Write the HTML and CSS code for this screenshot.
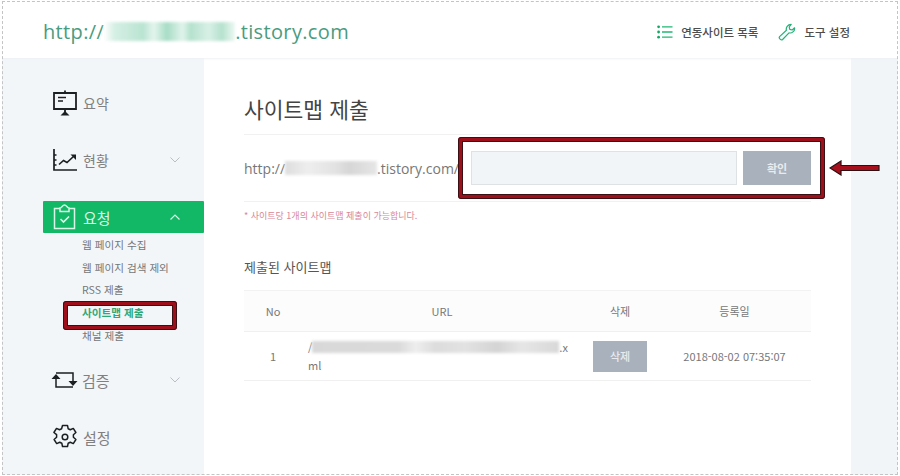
FILE: index.html
```html
<!DOCTYPE html>
<html lang="ko">
<head>
<meta charset="utf-8">
<title>사이트맵 제출</title>
<link rel="stylesheet" href="styles.css">
</head>
<body>
<div class="frame">
  <header class="top">
    <div class="logo">http://<span class="blur blur-green"></span>.tistory.com</div>
    <div class="tools">
      <a class="tool">
        <svg class="tool-icon" viewBox="0 0 16 14" width="16" height="14"><g fill="none" stroke="#1fb873" stroke-width="1.3"><path d="M5 1.8h10.5M5 7h10.5M5 12.2h10.5"/></g><g fill="#13a864"><circle cx="1.6" cy="1.8" r="1.4"/><circle cx="1.6" cy="7" r="1.4"/><circle cx="1.6" cy="12.2" r="1.4"/></g></svg>
        연동사이트 목록
      </a>
      <a class="tool">
        <svg class="tool-icon" viewBox="0 0 18 18" width="18" height="18"><path d="M1.6 13.6 8.4 7.3C7.7 4.6 9.6 1.4 13.2 1.4l-2 2.6.6 2.4 2.4.6 2.4-2.2c.4 3.4-2.8 5.9-5.6 5L4.6 16.5c-1.3 1.2-4.4-1.2-3-2.9Z" fill="none" stroke="#22b277" stroke-width="1.2" stroke-linejoin="round"/></svg>
        도구 설정
      </a>
    </div>
  </header>
  <div class="body">
    <nav class="side">
      <a class="nav n-summary">
        <svg class="nav-icon" viewBox="0 0 26 26" width="26" height="26"><g fill="none" stroke="#1c1f22" stroke-width="1.8"><path d="M2 3h22v16H2zM13 .5V3M13 19v6"/></g><path d="M6 7.5h8M6 11h5" stroke="#1c1f22" stroke-width="1.4"/><path d="M8.500 25.500 13 21l4.500 4.500Z" fill="#1c1f22"/></svg>
        <span>요약</span>
      </a>
      <a class="nav n-status">
        <svg class="nav-icon" viewBox="0 0 26 26" width="26" height="26"><path d="M2 2v21h23" fill="none" stroke="#1c1f22" stroke-width="1.700"/><path d="M2 8h2.500M2 13h2.500M2 18h2.500" stroke="#1c1f22" stroke-width="1.300"/><path d="M7 17.500l4.500-4 3.500 2 7-6.500" fill="none" stroke="#1c1f22" stroke-width="1.600"/><path d="M18.500 7.500h5.500v5.500Z" fill="#1c1f22"/></svg>
        <span>현황</span>
        <svg class="chev" viewBox="0 0 10 6" width="10" height="6"><path d="M.5.5 5 5 9.500.5" fill="none" stroke="#b9bfc5"/></svg>
      </a>
      <a class="nav active">
        <svg class="nav-icon" viewBox="0 0 26 26" width="26" height="26"><g fill="none" stroke="#d6f7e6" stroke-width="1.500"><path d="M8 4.500H2.500v20h20v-20H17"/><path d="M8 7.500V4c2-.5 2.500-3 4.500-3S15 3.500 17 4v3.500Z"/><path d="m8.500 15 3 3 5.500-5.500" stroke-width="1.700"/></g></svg>
        <span>요청</span>
        <svg class="chev" viewBox="0 0 10 6" width="10" height="6"><path d="M.5 5.500 5 1l4.500 4.500" fill="none" stroke="#d6f7e6" stroke-width="1.200"/></svg>
      </a>
      <ul class="sub">
        <li>웹 페이지 수집</li>
        <li>웹 페이지 검색 제외</li>
        <li>RSS 제출</li>
        <li class="current">사이트맵 제출</li>
        <li>채널 제출</li>
      </ul>
      <a class="nav n-verify">
        <svg class="nav-icon" viewBox="0 0 28 20" width="28" height="20"><g fill="none" stroke="#1c1f22" stroke-width="1.500"><path d="M6 8v9h17"/><path d="M23 12V3H6"/></g><path d="M1.500 9 6 4l4.500 5ZM18.500 11l4.500 5 4.500-5Z" fill="#1c1f22"/></svg>
        <span>검증</span>
        <svg class="chev" viewBox="0 0 10 6" width="10" height="6"><path d="M.5.5 5 5 9.500.5" fill="none" stroke="#b9bfc5"/></svg>
      </a>
      <a class="nav n-settings">
        <svg class="nav-icon" viewBox="0 0 26 26" width="26" height="26"><path d="M10.500 1.500h5l.7 3.300 2.100 1 3-1.400 2.600 4.100-2.500 2.200v2.600l2.500 2.200-2.600 4.100-3-1.400-2.100 1-.7 3.300h-5l-.7-3.300-2.100-1-3 1.400-2.600-4.100 2.500-2.200v-2.600L1.900 8.500l2.600-4.100 3 1.400 2.100-1Z" fill="none" stroke="#1c1f22" stroke-width="1.500" stroke-linejoin="round"/><circle cx="13" cy="13" r="2.800" fill="none" stroke="#1c1f22" stroke-width="1.500"/></svg>
        <span>설정</span>
      </a>
    </nav>
    <main class="content">
      <h1>사이트맵 제출</h1>
      <form class="submit-row">
        <div class="base">http://<span class="blur blur-gray"></span>.tistory.com/</div>
        <div class="field"></div>
        <div class="btn btn-ok">확인</div>
      </form>
      <p class="hint">* 사이트당 1개의 사이트맵 제출이 가능합니다.</p>
      <h2>제출된 사이트맵</h2>
      <table>
        <colgroup><col class="c-no"><col class="c-url"><col class="c-del"><col class="c-date"></colgroup>
        <thead><tr><th>No</th><th>URL</th><th>삭제</th><th>등록일</th></tr></thead>
        <tbody>
          <tr>
            <td>1</td>
            <td class="url"><div class="url-line">/<span class="blur blur-url"></span>.x</div>ml</td>
            <td><div class="btn btn-del">삭제</div></td>
            <td>2018-08-02 07:35:07</td>
          </tr>
        </tbody>
      </table>
    </main>
    <div class="gutter"></div>
  </div>
  <div class="dash"></div>
  <div class="mark mark-form"></div>
  <div class="mark mark-nav"></div>
  <svg class="arrow" viewBox="0 0 52 16" width="52" height="16"><path d="M1 8 12 1V5.500H50V10.500H12V15Z" fill="#a80f1c" stroke="#2b1013" stroke-width="1.200"/></svg>
</div>
</body>
</html>
```
FILE: styles.css
```css
* { box-sizing: border-box; }
html, body { margin: 0; padding: 0; }
body {
  width: 900px;
  height: 476px;
  overflow: hidden;
  background: #fff;
  font-family: "Noto Sans CJK KR", "Noto Sans", sans-serif;
  color: #666;
}
.frame {
  position: relative;
  width: 900px;
  height: 476px;
  border: 1px solid #fff;
  display: flex;
  flex-direction: column;
  overflow: hidden;
}
.dash {
  position: absolute;
  left: 1px;
  top: 0;
  width: 896px;
  height: 474px;
  border: 1px dashed #c4c4c4;
  box-shadow: 0 0 0 3px #fff;
  pointer-events: none;
}
.top {
  flex: 0 0 57px;
  padding: 0 49px 0 42px;
  display: flex;
  align-items: center;
  justify-content: space-between;
  background: #fff;
  box-shadow: 0 1px 2px #eef1f3;
  position: relative;
}
.logo {
  font-family: "Open Sans", sans-serif;
  font-size: 20px;
  color: #4a9c7f;
  display: flex;
  align-items: center;
  letter-spacing: .35px;
  margin-top: 3px;
}
.blur { display: inline-block; filter: blur(1.5px); }
.blur-green {
  width: 131px;
  height: 19px;
  background: linear-gradient(90deg, #fff 0, #d5efe4 8%, #b9e4d2 30%, #e4f5ee 38%, #a7dcc5 48%, #e1f4ec 60%, #b5e1ce 66%, #d8f0e6 80%, #b5e1ce 90%, #eef9f4 100%);
}
.tools { display: flex; align-items: center; gap: 20px; margin-top: 5px; }
.tool {
  display: flex;
  align-items: center;
  gap: 8px;
  font-size: 11.500px;
  font-weight: 500;
  color: #4d4d4d;
}
.body { flex: 1; display: flex; min-height: 0; }
.side {
  flex: 0 0 203px;
  background: #f3f6f9;
  padding-left: 42px;
  padding-top: 29px;
}
.nav {
  height: 32px;
  padding-left: 8px;
  display: flex;
  align-items: center;
  font-size: 14px;
  color: #808080;
  position: relative;
}
.nav-icon { flex: none; margin-right: 5px; margin-left: 1px; }
.chev { position: absolute; left: 127px; top: 13px; }
.n-status { margin-top: 25px; }
.active {
  margin-top: 25px;
  background: #12b865;
  color: #d9f8e8;
  font-size: 15px;
  border-radius: 1px;
}
.sub {
  list-style: none;
  margin: 1px 0 0;
  padding: 0 0 0 39px;
  font-size: 10.600px;
  color: #72767a;
}
.sub li { height: 22.700px; line-height: 22.700px; white-space: nowrap; }
.sub .current { color: #2fa878; font-weight: 700; }
.n-verify { margin-top: 17px; padding-left: 8px; font-size: 15px; }
.n-verify .nav-icon { margin-left: -1px; margin-right: 4px; }
.n-settings { margin-top: 25px; font-size: 15px; }
.content {
  flex: 0 0 647px;
  background: #fff;
  padding: 0 40px;
}
h1 {
  margin: 0;
  height: 77px;
  padding-top: 37px;
  font-size: 21.500px;
  line-height: 28px;
  font-weight: 400;
  color: #444;
  border-bottom: 1px solid #f1f1f1;
}
.submit-row {
  margin: 0;
  height: 67px;
  display: flex;
  align-items: center;
  border-bottom: 1px solid #f1f1f1;
  font-size: 14px;
}
.base {
  flex: 0 0 227px;
  display: flex;
  align-items: center;
  font-family: "Open Sans", sans-serif;
  font-size: 14px;
  color: #777;
  white-space: nowrap;
  overflow: hidden;
}
.blur-gray {
  width: 92px;
  height: 14px;
  background: linear-gradient(90deg, #ddd 0, #eee 25%, #e2e2e2 55%, #d6d6d6 70%, #e6e6e6 100%);
}
.field {
  flex: 0 0 266px;
  height: 34px;
  background: #f2f5f8;
  border: 1px solid #dfe2e5;
}
.btn {
  display: flex;
  align-items: center;
  justify-content: center;
  background: #a9b1bc;
  color: #e7ebef;
  font-size: 11px;
  font-weight: 700;
}
.btn-ok { flex: 0 0 68px; height: 34px; margin-left: 6px; }
.hint {
  margin: 0;
  padding-top: 6px;
  height: 27px;
  font-size: 9px;
  line-height: 15px;
  color: #d98797;
}
h2 {
  margin: 0;
  padding-top: 28px;
  height: 61px;
  font-size: 13px;
  line-height: 20px;
  font-weight: 400;
  color: #555;
}
table {
  width: 567px;
  table-layout: fixed;
  border-collapse: collapse;
  font-size: 11px;
  color: #777;
}
.c-no { width: 58px; }
.c-url { width: 280px; }
.c-del { width: 76px; }
.c-date { width: 153px; }
th {
  height: 41px;
  padding: 0;
  font-weight: 400;
  text-align: center;
  background: #fcfcfc;
  border-top: 1px solid #f2f2f2;
  border-bottom: 1px solid #f0f0f0;
}
td {
  height: 49px;
  padding: 0;
  text-align: center;
  border-bottom: 1px solid #f0f0f0;
}
td.url { text-align: left; padding-left: 6px; line-height: 18px; }
.url-line { display: flex; align-items: center; height: 18px; }
.blur-url {
  width: 247px;
  height: 12px;
  background: linear-gradient(90deg, #d8d8d8 0, #dadada 35%, #eeeeee 42%, #dcdcdc 50%, #e2e2e2 62%, #d4d4d4 75%, #e6e6e6 85%, #d8d8d8 100%);
}
.btn-del { width: 54px; height: 31px; margin: 0 auto; font-size: 11px; font-weight: 500; }
.gutter { flex: 1; background: #f1f5f8; }
.mark {
  position: absolute;
  border: 4px solid #9c0f1b;
  border-radius: 3px;
  outline: 1px solid #3a1015;
  outline-offset: -1px;
  box-shadow: inset 0 0 0 1px #3a1015;
}
.mark-form { left: 457px; top: 136px; width: 367px; height: 62px; }
.mark-nav { left: 62px; top: 300px; width: 114px; height: 29px; }
.arrow { position: absolute; left: 828px; top: 159px; }
```
